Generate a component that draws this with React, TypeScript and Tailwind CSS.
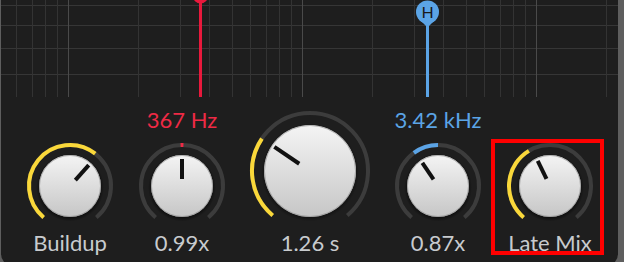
import React from 'react';

const GRID_FREQS = [60, 70, 80, 90, 100, 200, 300, 400, 500, 600, 700, 800, 900, 1000, 2000, 3000, 4000, 5000, 6000, 7000, 8000, 9000, 10000, 20000];
const GRID_ROWS = [5, 25, 48, 74];

// x in page px for a frequency (log scale, 234px per decade)
const freqX = (f: number) => 68 + 234 * Math.log10(f / 100) - 1;

const pt = (cx: number, cy: number, r: number, deg: number) => {
  const a = (deg * Math.PI) / 180;
  return [cx + r * Math.sin(a), cy - r * Math.cos(a)];
};

const arc = (cx: number, cy: number, r: number, from: number, to: number) => {
  const [x1, y1] = pt(cx, cy, r, from);
  const [x2, y2] = pt(cx, cy, r, to);
  const large = Math.abs(to - from) > 180 ? 1 : 0;
  const sweep = to > from ? 1 : 0;
  return `M ${x1} ${y1} A ${r} ${r} 0 ${large} ${sweep} ${x2} ${y2}`;
};

type KnobProps = {
  size: number;
  body: number;
  ring: number;
  from: number;
  to: number;
  color: string;
  angle: number;
  pIn: number;
  pOut: number;
  id: string;
};

function Knob({ size, body, ring, from, to, color, angle, pIn, pOut, id }: KnobProps) {
  const c = size / 2;
  const [px1, py1] = pt(c, c, pIn, angle);
  const [px2, py2] = pt(c, c, pOut, angle);
  return (
    <svg width={size} height={size} viewBox={`0 0 ${size} ${size}`}>
      <defs>
        <linearGradient id={`g-${id}`} x1="0" y1="0" x2="0" y2="1">
          <stop offset="0%" stopColor="#f4f4f4" />
          <stop offset="100%" stopColor="#c6c6c6" />
        </linearGradient>
        <radialGradient id={`s-${id}`} cx="0.5" cy="0.5" r="0.5">
          <stop offset="85%" stopColor="#000" stopOpacity="0.6" />
          <stop offset="100%" stopColor="#000" stopOpacity="0" />
        </radialGradient>
      </defs>
      <path d={arc(c, c, ring, -140, 140)} stroke="#3c3c3c" strokeWidth={4} fill="none" />
      {from !== to && <path d={arc(c, c, ring, from, to)} stroke={color} strokeWidth={4} fill="none" />}
      <circle cx={c} cy={c + 1.5} r={body + 3} fill={`url(#s-${id})`} />
      <circle cx={c} cy={c} r={body} fill={`url(#g-${id})`} />
      <circle cx={c} cy={c} r={body - 0.5} fill="none" stroke="#8a8a8a" strokeOpacity={0.6} />
      <line x1={px1} y1={py1} x2={px2} y2={py2} stroke="#111" strokeWidth={4} />
    </svg>
  );
}

const font = { fontFamily: 'Lato, "Noto Sans", sans-serif' };

function Column({ top, topColor, label, children, width }: { top?: string; topColor?: string; label: string; children: React.ReactNode; width: number }) {
  return (
    <div className="flex flex-col items-center" style={{ width }}>
      {top && (
        <div className={`text-[22px] leading-[22px] whitespace-nowrap mb-[9px] ${topColor}`}>{top}</div>
      )}
      {children}
      <div className="text-[22px] leading-[22px] whitespace-nowrap text-[#c8cbce]">{label}</div>
    </div>
  );
}

export default function App() {
  return (
    <div className="relative w-[624px] h-[262px] overflow-hidden bg-[#5e5e5e]" style={font}>
      <div className="ml-[1px] w-[617px] h-[266px] bg-[#1e1e1e] rounded-b-[12px] flex flex-col">
        <svg width={617} height={97} className="block">
          {GRID_ROWS.map((y) => (
            <line key={y} x1={0} x2={617} y1={y + 0.5} y2={y + 0.5} stroke="#363636" strokeWidth={1} />
          ))}
          {GRID_FREQS.map((f) => {
            const x = Math.round(freqX(f)) + 0.5;
            const major = f === 100 || f === 1000 || f === 10000;
            return <line key={f} x1={x} x2={x} y1={0} y2={97} stroke={major ? '#4a4a4a' : '#333333'} strokeWidth={1} />;
          })}
          <line x1={199.5} x2={199.5} y1={0} y2={97} stroke="#e8193c" strokeWidth={3} />
          <circle cx={199.5} cy={-4} r={7.5} fill="#e8193c" />
          <line x1={426.5} x2={426.5} y1={12} y2={97} stroke="#5ba4e6" strokeWidth={3} />
          <path d="M 420 21 L 433 21 L 428 26 L 425 26 Z" fill="#5ba4e6" />
          <circle cx={426.5} cy={12} r={11.5} fill="#5ba4e6" />
          <text x={426.5} y={17.5} textAnchor="middle" fontSize={16} fill="#1a1a1a" style={font}>H</text>
        </svg>
        <div className="flex flex-1 items-end gap-5 pl-[23px] pb-[12px]">
          <Column label="Buildup" width={92}>
            <Knob id="a" size={92} body={31} ring={41} from={-140} to={38} color="#fad83a" angle={42} pIn={8} pOut={28} />
          </Column>
          <Column label="0.99x" top="367 Hz" topColor="text-[#ee2a45]" width={92}>
            <Knob id="b" size={92} body={31} ring={41} from={-2} to={2} color="#ee2a45" angle={0} pIn={7} pOut={27} />
          </Column>
          <Column label="1.26 s" width={124}>
            <Knob id="c" size={122} body={46} ring={58} from={-140} to={-56} color="#fad83a" angle={-56} pIn={13} pOut={43} />
          </Column>
          <Column label="0.87x" top="3.42 kHz" topColor="text-[#5ba4e6]" width={92}>
            <Knob id="d" size={92} body={31} ring={41} from={-36} to={0} color="#5ba4e6" angle={-34} pIn={8} pOut={28} />
          </Column>
          <Column label="Late Mix" width={92}>
            <Knob id="e" size={92} body={31} ring={41} from={-140} to={-31} color="#fad83a" angle={-26} pIn={8} pOut={28} />
          </Column>
        </div>
      </div>
      <div className="absolute left-[491px] top-[139px] w-[113px] h-[116px] border-4 border-[#ff0000]" />
    </div>
  );
}
